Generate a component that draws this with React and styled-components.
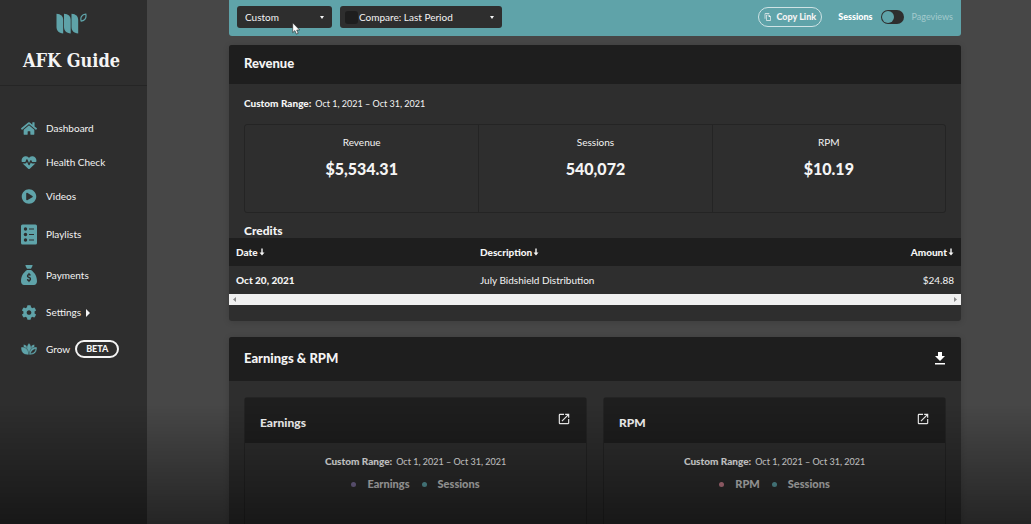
import styled, { createGlobalStyle } from "styled-components";
import { FaHome, FaPlayCircle, FaCog } from "react-icons/fa";
import { FaHeartPulse, FaSackDollar } from "react-icons/fa6";
import { MdOutlineFileCopy, MdOpenInNew } from "react-icons/md";

const GlobalStyle = createGlobalStyle`
  * {
    box-sizing: border-box;
  }

  body {
    margin: 0;
    background: #474747;
    color: #f4f4f4;
    font-family: Lato, "Liberation Sans", sans-serif;
    font-size: 10px;
    line-height: 16px;
  }

  button,
  input,
  select {
    font: inherit;
    color: inherit;
    margin: 0;
  }
`;

const Page = styled.div`
  display: flex;
  height: 100vh;
  overflow: hidden;
`;

const Sidebar = styled.aside`
  flex: 0 0 147px;
  background: #2e2e2e;
`;

const Brand = styled.div`
  display: flex;
  flex-direction: column;
  align-items: center;
  height: 86px;
  padding: 13px 4px 0 0;
  border-bottom: 1px solid #252525;
`;

const BrandName = styled.h1`
  margin: 15px 0 0;
  font-family: "DejaVu Serif Condensed", "DejaVu Serif", serif;
  font-size: 18px;
  line-height: 24px;
  white-space: nowrap;
`;

const Nav = styled.nav`
  padding: 25px 0 0 21px;
`;

const NavLink = styled.a`
  display: flex;
  align-items: center;
  gap: 9px;
  padding: 10px 0;
  color: #f4f4f4;
  line-height: 13px;
  text-decoration: none;
`;

const NavIcon = styled.span`
  display: flex;
  width: 16px;
  color: #5fa3a9;

  svg {
    display: block;
    width: 16px;
    height: ${(props) => props.$height}px;
  }
`;

const Caret = styled.span`
  margin-left: -4px;
  border: 4px solid transparent;
  border-left: 4px solid #f4f4f4;
  border-right: 0;
`;

const Beta = styled.span`
  margin-left: -4px;
  padding: 0 9px;
  border: 2px solid #f4f4f4;
  border-radius: 9px;
  font-size: 9px;
  font-weight: 900;
  line-height: 14px;
`;

const Main = styled.main`
  flex: 1;
  min-width: 0;
  padding: 0 70px 0 82px;
`;

const Toolbar = styled.div`
  display: flex;
  align-items: center;
  gap: 8px;
  height: 36px;
  margin-bottom: 9px;
  padding: 0 8px 2px;
  background: #5fa3a9;
  border-radius: 0 0 3px 3px;
`;

const Dropdown = styled.div`
  position: relative;
  display: flex;
  align-items: center;
  width: ${(props) => props.$width}px;
  height: 22px;
  background: #2e2e2e;
  border-radius: 3px;

  &::after {
    content: "";
    position: absolute;
    right: 8px;
    border: 2px solid transparent;
    border-top: 3px solid #f4f4f4;
    border-bottom: 0;
    pointer-events: none;
  }
`;

const Select = styled.select`
  flex: 1;
  min-width: 0;
  height: 22px;
  padding: 0 ${(props) => (props.$tight ? 1 : 8)}px;
  border: 0;
  outline: 0;
  appearance: none;
  background: transparent;

  option {
    background: #2e2e2e;
  }
`;

const CompareBox = styled.input`
  appearance: none;
  width: 13px;
  height: 13px;
  margin-left: 5px;
  background: #1e1e1e;
  border-radius: 3px;
`;

const CopyLink = styled.button`
  display: flex;
  align-items: center;
  gap: 4px;
  height: 20px;
  margin-left: auto;
  padding: 0 5px;
  border: 1px solid #cfe3e5;
  border-radius: 10px;
  background: transparent;
  font-size: 9px;
  font-weight: 900;
  white-space: nowrap;
`;

const MetricSwitch = styled.label`
  display: flex;
  align-items: center;
  gap: 8px;
  margin-left: 8px;
  font-size: 9px;
`;

const MetricName = styled.span`
  color: ${(props) => (props.$active ? "#ffffff" : "#a3cacd")};
  font-weight: ${(props) => (props.$active ? 900 : 400)};
`;

const Toggle = styled.input`
  appearance: none;
  display: flex;
  width: 23px;
  height: 14px;
  padding: 1px;
  border-radius: 7px;
  background: #2e2e2e;

  &::before {
    content: "";
    width: 12px;
    height: 12px;
    border-radius: 50%;
    background: #5fa3a9;
  }

  &:checked {
    justify-content: flex-end;
  }
`;

const Card = styled.section`
  margin-bottom: 16px;
  background: #2e2e2e;
  border-radius: 3px;
  box-shadow: 0 1px 6px rgba(0, 0, 0, 0.15);
  overflow: hidden;
`;

const CardHeader = styled.header`
  display: flex;
  align-items: center;
  justify-content: space-between;
  height: ${(props) => props.$height}px;
  padding: 0 15px 3px;
  background: #1e1e1e;
`;

const CardTitle = styled.h2`
  margin: 0;
  font-size: 13px;
  font-weight: 900;
`;

const IconButton = styled.button`
  display: flex;
  padding: 0;
  border: 0;
  background: transparent;
`;

const Range = styled.p`
  margin: 0;
  font-size: 9px;

  b {
    margin-right: 4px;
    font-size: 10px;
    font-weight: 900;
  }
`;

const RevenueBody = styled.div`
  padding: 11px 15px 10px;
`;

const Stats = styled.dl`
  display: grid;
  grid-template-columns: repeat(3, 1fr);
  height: 89px;
  margin: 12px 0 0;
  border: 1px solid #242424;
  border-radius: 3px;
`;

const Stat = styled.div`
  padding-top: 9px;
  text-align: center;

  & + & {
    border-left: 1px solid #242424;
  }
`;

const StatLabel = styled.dt`
  font-size: 10px;
`;

const StatValue = styled.dd`
  margin: 9px 0 0;
  font-size: 16px;
  font-weight: 900;
  line-height: 20px;
`;

const CreditsTitle = styled.h3`
  margin: 0 15px;
  font-size: 12px;
  font-weight: 900;
  line-height: 15px;
`;

const CreditsTable = styled.table`
  width: 100%;
  border-collapse: collapse;
  table-layout: fixed;

  th,
  td {
    padding: 0 7px;
    text-align: left;
  }

  th {
    font-weight: 900;
  }

  th:last-child,
  td:last-child {
    text-align: right;
  }

  thead tr {
    height: 28px;
    background: #1e1e1e;
  }

  tbody tr {
    height: 28px;
  }
`;

const SortButton = styled.button`
  display: inline-flex;
  align-items: center;
  gap: 1px;
  padding: 0;
  border: 0;
  background: transparent;
  font-weight: 900;
`;

const ScrollTrack = styled.div`
  display: flex;
  justify-content: space-between;
  height: 11px;
  margin-bottom: 16px;
  padding: 0 4px;
  background: #f0f0f0;
`;

const ScrollArrow = styled.button`
  display: flex;
  align-items: center;
  padding: 0;
  border: 0;
  background: transparent;
`;

const Charts = styled.div`
  display: grid;
  grid-template-columns: 1fr 1fr;
  gap: 16px;
  padding: 16px 15px;
`;

const ChartCard = styled.article`
  min-height: 240px;
  border: 1px solid #242424;
  border-radius: 3px;
`;

const ChartHeader = styled.header`
  display: flex;
  align-items: flex-start;
  justify-content: space-between;
  height: 45px;
  padding: 14px 15px 0;
  background: #1e1e1e;
`;

const ChartTitle = styled.h3`
  margin: 3px 0 0;
  font-size: 12px;
  font-weight: 900;
`;

const ChartBody = styled.div`
  display: flex;
  flex-direction: column;
  align-items: center;
  gap: 6px;
  padding-top: 10px;
`;

const Legend = styled.ul`
  display: flex;
  gap: 12px;
  margin: 0;
  padding: 0;
  list-style: none;
`;

const LegendItem = styled.li`
  display: flex;
  align-items: center;
  gap: 11px;
  font-size: 11px;
  font-weight: 900;
  color: #d0d0d0;

  &::before {
    content: "";
    width: 5px;
    height: 5px;
    border-radius: 50%;
    background: ${(props) => props.$color};
  }
`;

const BottomFade = styled.div`
  position: fixed;
  inset: auto 0 0;
  height: 118px;
  background: linear-gradient(rgba(0, 0, 0, 0), rgba(0, 0, 0, 0.48));
  pointer-events: none;
`;

const Pointer = styled.svg`
  position: absolute;
  top: 16px;
  left: 55px;
  z-index: 1;
  pointer-events: none;
`;

function Logo() {
  return (
    <svg width="31" height="21" viewBox="0 0 31 21" fill="#5fa3a9">
      <path d="M.5.8C5 1 7.200 3.500 7.200 7v13.500C2.700 20 .5 17.500.5 14z" />
      <path d="M8 .8c4.500.2 6.700 2.700 6.700 6.200v13.500C10.200 20 8 17.500 8 14z" />
      <path d="M15.500.8c4.500.2 6.700 2.700 6.700 6.200v13.500c-4.500-.5-6.700-3-6.700-6.500z" />
      <path
        d="M29.800 1.200c.8 3.600-.8 6.500-4.600 6.900-1.200-3.700.6-6.700 4.600-6.900z"
        fill="none"
        stroke="#5fa3a9"
        strokeWidth="1.200"
      />
    </svg>
  );
}

function PlaylistIcon() {
  return (
    <svg viewBox="0 0 16 21">
      <rect y="0.500" width="16" height="20" rx="1.500" fill="currentColor" />
      <g fill="#2e2e2e">
        <circle cx="4.500" cy="5" r="1.700" />
        <circle cx="4.500" cy="10.500" r="1.700" />
        <circle cx="4.500" cy="16" r="1.700" />
        <path d="M8 4.500h5v1H8zM8 10h5v1H8zM8 15.500h5v1H8z" />
      </g>
    </svg>
  );
}

function LotusIcon() {
  return (
    <svg viewBox="0 0 16 12" fill="currentColor" stroke="#2e2e2e" strokeWidth="0.400">
      <path d="M2.500 1.500C6 1.500 8 5 8 11 4.500 10 2 6 2.500 1.500z" />
      <path d="M13.500 1.500C10 1.500 8 5 8 11c3.500-1 6-5 5.500-9.500z" />
      <path d="M8 0c3 3 3 7.500 0 11.500C5 7.500 5 3 8 0z" />
      <path d="M0 4.200c4.500-.6 7.500 2 8 7.500C3.200 12.500-.2 9.800 0 4.200z" />
      <path d="M16 4.200c-4.500-.6-7.500 2-8 7.500 4.800.8 8.200-1.900 8-7.500z" />
      <path d="M9.800 10.300c.8-2.300 2.200-3.600 4.500-4.300-.2 2.500-1.800 4-4.500 4.300z" fill="#2e2e2e" />
    </svg>
  );
}

function SortArrow() {
  return (
    <svg width="6" height="8" viewBox="0 0 6 8" fill="#f4f4f4">
      <path d="M2.300 0.500h1.400v4h1.800L3 7.500.5 4.500h1.800z" />
    </svg>
  );
}

const navItems = [
  { label: "Dashboard", icon: <FaHome />, height: 15 },
  { label: "Health Check", icon: <FaHeartPulse viewBox="0 32 512 448" />, height: 13 },
  { label: "Videos", icon: <FaPlayCircle />, height: 15 },
  { label: "Playlists", icon: <PlaylistIcon />, height: 21 },
  { label: "Payments", icon: <FaSackDollar viewBox="0 0 512 512" preserveAspectRatio="none" />, height: 20 },
  { label: "Settings", icon: <FaCog />, height: 15, extra: <Caret /> },
  { label: "Grow", icon: <LotusIcon />, height: 12, extra: <Beta>BETA</Beta> },
];

const stats = [
  { label: "Revenue", value: "$5,534.31" },
  { label: "Sessions", value: "540,072" },
  { label: "RPM", value: "$10.19" },
];

const charts = [
  { title: "Earnings", color: "#7d6f9b" },
  { title: "RPM", color: "#c97f8d" },
];

function DateRange() {
  return (
    <Range>
      <b>Custom Range:</b>
      Oct 1, 2021 – Oct 31, 2021
    </Range>
  );
}

export default function App() {
  return (
    <Page>
      <GlobalStyle />

      <Sidebar>
        <Brand>
          <Logo />
          <BrandName>AFK Guide</BrandName>
        </Brand>
        <Nav>
          {navItems.map((item) => (
            <NavLink key={item.label} href="#">
              <NavIcon $height={item.height}>{item.icon}</NavIcon>
              {item.label}
              {item.extra}
            </NavLink>
          ))}
        </Nav>
      </Sidebar>

      <Main>
        <Toolbar>
          <Dropdown $width={95}>
            <Select aria-label="Date range">
              <option>Custom</option>
            </Select>
            <Pointer width="9" height="13" viewBox="0 0 9 13">
              <path
                d="M.7.8v9.800l2.200-2 1.500 3.500 1.800-.8-1.500-3.300h3z"
                fill="#fff"
                stroke="#222"
                strokeWidth="0.600"
              />
            </Pointer>
          </Dropdown>
          <Dropdown $width={162}>
            <CompareBox type="checkbox" aria-label="Compare" />
            <Select $tight aria-label="Compare period">
              <option>Compare: Last Period</option>
            </Select>
          </Dropdown>
          <CopyLink type="button">
            <MdOutlineFileCopy size={8} />
            Copy Link
          </CopyLink>
          <MetricSwitch>
            <MetricName $active>Sessions</MetricName>
            <Toggle type="checkbox" role="switch" />
            <MetricName>Pageviews</MetricName>
          </MetricSwitch>
        </Toolbar>

        <Card>
          <CardHeader $height={39}>
            <CardTitle>Revenue</CardTitle>
          </CardHeader>
          <RevenueBody>
            <DateRange />
            <Stats>
              {stats.map((stat) => (
                <Stat key={stat.label}>
                  <StatLabel>{stat.label}</StatLabel>
                  <StatValue>{stat.value}</StatValue>
                </Stat>
              ))}
            </Stats>
          </RevenueBody>
          <CreditsTitle>Credits</CreditsTitle>
          <CreditsTable>
            <thead>
              <tr>
                {["Date", "Description", "Amount"].map((name) => (
                  <th key={name} scope="col">
                    <SortButton type="button">
                      {name}
                      <SortArrow />
                    </SortButton>
                  </th>
                ))}
              </tr>
            </thead>
            <tbody>
              <tr>
                <th scope="row">Oct 20, 2021</th>
                <td>July Bidshield Distribution</td>
                <td>$24.88</td>
              </tr>
            </tbody>
          </CreditsTable>
          <ScrollTrack>
            <ScrollArrow type="button" aria-label="Scroll left">
              <svg width="3" height="5" viewBox="0 0 3 5" fill="#8a8a8a">
                <path d="M3 0v5L0 2.500z" />
              </svg>
            </ScrollArrow>
            <ScrollArrow type="button" aria-label="Scroll right">
              <svg width="3" height="5" viewBox="0 0 3 5" fill="#8a8a8a">
                <path d="M0 0v5l3-2.500z" />
              </svg>
            </ScrollArrow>
          </ScrollTrack>
        </Card>

        <Card>
          <CardHeader $height={44}>
            <CardTitle>Earnings &amp; RPM</CardTitle>
            <IconButton type="button" aria-label="Download">
              <svg width="12" height="14" viewBox="0 0 12 14" fill="#fff">
                <path d="M4 1h4v4h3l-5 5-5-5h3zM1 12h10v1.500H1z" />
              </svg>
            </IconButton>
          </CardHeader>
          <Charts>
            {charts.map((chart) => (
              <ChartCard key={chart.title}>
                <ChartHeader>
                  <ChartTitle>{chart.title}</ChartTitle>
                  <IconButton type="button" aria-label={`Open ${chart.title}`}>
                    <MdOpenInNew size={14} />
                  </IconButton>
                </ChartHeader>
                <ChartBody>
                  <DateRange />
                  <Legend>
                    <LegendItem $color={chart.color}>{chart.title}</LegendItem>
                    <LegendItem $color="#5fa3a9">Sessions</LegendItem>
                  </Legend>
                </ChartBody>
              </ChartCard>
            ))}
          </Charts>
        </Card>
      </Main>

      <BottomFade />
    </Page>
  );
}
